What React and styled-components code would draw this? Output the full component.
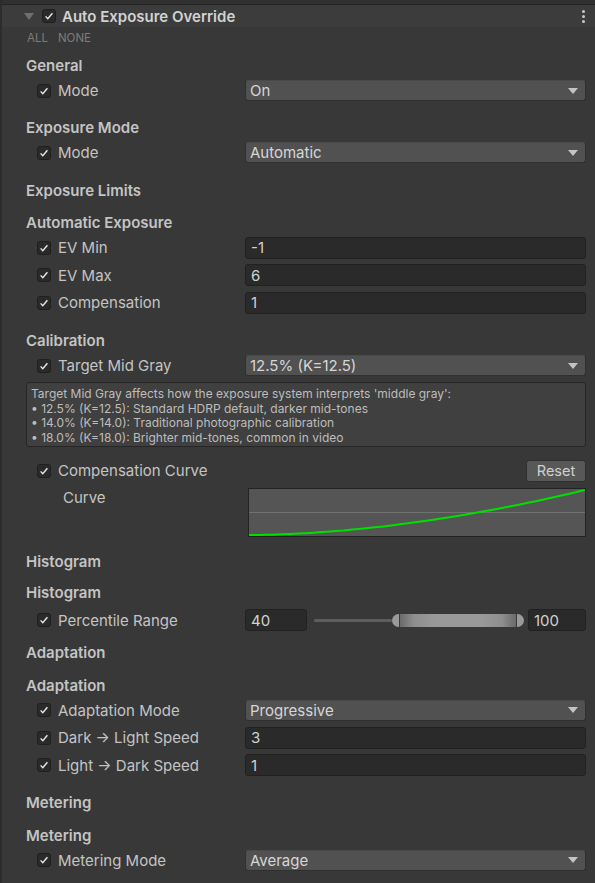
import React from 'react';
import styled, { createGlobalStyle } from 'styled-components';

const GlobalStyle = createGlobalStyle`
  html, body {
    margin: 0;
    padding: 0;
    background: #383838;
  }
  body {
    font-family: Inter, "Noto Sans", "DejaVu Sans", sans-serif;
    color: #c4c4c4;
  }
`;

const Panel = styled.div`
  width: 595px;
  height: 883px;
  box-sizing: border-box;
  background: #383838;
  border-left: 2px solid #2c2c2c;
  overflow: hidden;
`;

const TopStrip = styled.div`
  height: 4px;
  background: #303030;
  border-bottom: 1px solid #232323;
`;

const Header = styled.div`
  height: 22px;
  display: flex;
  align-items: center;
  background: #3c3c3c;
  padding-left: 22px;
  padding-right: 10px;
`;

const Foldout = styled.span`
  width: 0;
  height: 0;
  border-left: 5px solid transparent;
  border-right: 5px solid transparent;
  border-top: 7px solid #6f6f6f;
  margin-right: 8px;
`;

const Title = styled.span`
  font-size: 15px;
  font-weight: 600;
  color: #d2d2d2;
  margin-left: 6px;
  flex: 1;
`;

const Kebab = styled.span`
  display: flex;
  flex-direction: column;
  gap: 2px;
  span {
    width: 3px;
    height: 3px;
    border-radius: 50%;
    background: #c8c8c8;
  }
`;

const AllNone = styled.div`
  height: 18px;
  padding-top: 2px;
  display: flex;
  align-items: center;
  gap: 10px;
  padding-left: 25px;
  font-size: 11.5px;
  color: #7c7c7c;
`;

const Heading = styled.div`
  height: 22px;
  line-height: 22px;
  margin-top: ${p => p.$mt || 0}px;
  padding-left: 24px;
  font-size: 15px;
  font-weight: 600;
  color: #c4c4c4;
`;

const Row = styled.div`
  height: 27.5px;
  margin-top: ${p => p.$mt || 0}px;
  display: flex;
  align-items: center;
  padding: 0 9px 0 35px;
`;

const LabelCell = styled.div`
  width: 208px;
  flex: none;
  display: flex;
  align-items: center;
  gap: 7px;
  font-size: 15px;
  color: #c4c4c4;
  white-space: nowrap;
`;

const Box = styled.span`
  width: 14px;
  height: 14px;
  box-sizing: border-box;
  flex: none;
  border-radius: 3px;
  background: #2a2a2a;
  border: 1px solid #1f1f1f;
  display: flex;
  align-items: center;
  justify-content: center;
`;

const Dropdown = styled.div`
  flex: 1;
  height: 21px;
  box-sizing: border-box;
  border-radius: 3px;
  background: #515151;
  border: 1px solid #303030;
  border-top-color: #4a4a4a;
  display: flex;
  align-items: center;
  padding: 0 7px 0 4px;
  font-size: 15px;
  color: #d6d6d6;
  span:first-child { flex: 1; }
`;

const Arrow = styled.span`
  width: 0;
  height: 0;
  border-left: 5px solid transparent;
  border-right: 5px solid transparent;
  border-top: 6px solid #c4c4c4;
`;

const Field = styled.div`
  flex: ${p => (p.$w ? 'none' : 1)};
  width: ${p => (p.$w ? `${p.$w}px` : 'auto')};
  height: 22px;
  box-sizing: border-box;
  border-radius: 3px;
  background: #2a2a2a;
  border: 1px solid #212121;
  display: flex;
  align-items: center;
  padding-left: 5px;
  font-size: 15px;
  color: #d2d2d2;
`;

const HelpBox = styled.div`
  margin: 2.5px 9px 0 24px;
  height: 65px;
  box-sizing: border-box;
  border: 1px solid #262626;
  border-radius: 3px;
  background: #404040;
  padding: 4px 4px 0;
  font-size: 12px;
  line-height: 14.5px;
  color: #bdbdbd;
`;

const ResetButton = styled.div`
  margin-left: auto;
  width: 60px;
  height: 22px;
  box-sizing: border-box;
  border-radius: 3px;
  background: #585858;
  border: 1px solid #303030;
  display: flex;
  align-items: center;
  justify-content: center;
  font-size: 14.5px;
  color: #d0d0d0;
`;

const CurveRow = styled.div`
  display: flex;
  margin-top: 3px;
  padding: 0 9px 0 61px;
`;

const CurveLabel = styled.div`
  width: 185px;
  flex: none;
  font-size: 15px;
  line-height: 20px;
  color: #c4c4c4;
`;

const CurveBox = styled.div`
  flex: 1;
  height: 49px;
  box-sizing: border-box;
  border: 1px solid #232323;
  background: #555555;
  svg { display: block; }
`;

const Slider = styled.div`
  flex: 1;
  height: 22px;
  margin: 0 4px 0 7px;
  display: flex;
  align-items: center;
`;

const Track = styled.div`
  width: 78px;
  height: 3px;
  background: #5e5e5e;
  border-radius: 2px;
  flex: none;
`;

const Range = styled.div`
  flex: 1;
  height: 13px;
  display: flex;
  align-items: stretch;
`;

const Cap = styled.span`
  width: 7px;
  background: #9a9a9a;
  border-radius: ${p => (p.$right ? '0 7px 7px 0' : '7px 0 0 7px')};
  border-${p => (p.$right ? 'left' : 'right')}: 1.5px solid #3a3a3a;
`;

const RangeBody = styled.span`
  flex: 1;
  background: linear-gradient(90deg, #6a6a6a 0%, #8e8e8e 12%, #999 30%, #999 70%, #8e8e8e 88%, #6a6a6a 100%);
`;

const Check = () => (
  <Box>
    <svg width="10" height="10" viewBox="0 0 10 10">
      <polyline points="1.6,5.4 3.8,7.8 8.4,2.2" fill="none" stroke="#e8e8e8" strokeWidth="1.4" />
    </svg>
  </Box>
);

const curvePath = (() => {
  const w = 336;
  const h = 47;
  const pts = [];
  for (let i = 0; i <= 60; i++) {
    const t = i / 60;
    const y = h - 1 - Math.pow(t, 1.8) * (h - 2);
    pts.push(`${(t * w).toFixed(1)},${y.toFixed(1)}`);
  }
  return 'M' + pts.join(' L');
})();

const PropRow = ({ label, mt, children }) => (
  <Row $mt={mt}>
    <LabelCell>
      <Check />
      {label}
    </LabelCell>
    {children}
  </Row>
);

const Select = ({ value }) => (
  <Dropdown>
    <span>{value}</span>
    <Arrow />
  </Dropdown>
);

export default function App() {
  return (
    <>
      <GlobalStyle />
      <Panel>
        <TopStrip />
        <Header>
          <Foldout />
          <Check />
          <Title>Auto Exposure Override</Title>
          <Kebab><span /><span /><span /></Kebab>
        </Header>
        <AllNone><span>ALL</span><span>NONE</span></AllNone>

        <Heading $mt={8}>General</Heading>
        <PropRow label="Mode"><Select value="On" /></PropRow>

        <Heading $mt={12.5}>Exposure Mode</Heading>
        <PropRow label="Mode"><Select value="Automatic" /></PropRow>

        <Heading $mt={13.5}>Exposure Limits</Heading>
        <Heading $mt={10}>Automatic Exposure</Heading>
        <PropRow label="EV Min"><Field>-1</Field></PropRow>
        <PropRow label="EV Max"><Field>6</Field></PropRow>
        <PropRow label="Compensation"><Field>1</Field></PropRow>

        <Heading $mt={13.5}>Calibration</Heading>
        <PropRow label="Target Mid Gray"><Select value="12.5% (K=12.5)" /></PropRow>
        <HelpBox>
          Target Mid Gray affects how the exposure system interprets 'middle gray':<br />
          • 12.5% (K=12.5): Standard HDRP default, darker mid-tones<br />
          • 14.0% (K=14.0): Traditional photographic calibration<br />
          • 18.0% (K=18.0): Brighter mid-tones, common in video
        </HelpBox>
        <PropRow label="Compensation Curve" mt={10}>
          <ResetButton>Reset</ResetButton>
        </PropRow>
        <CurveRow>
          <CurveLabel>Curve</CurveLabel>
          <CurveBox>
            <svg width="336" height="47" viewBox="0 0 336 47" preserveAspectRatio="none">
              <line x1="0" y1="23.5" x2="336" y2="23.5" stroke="#717171" strokeWidth="1" />
              <path d={curvePath} fill="none" stroke="#00e000" strokeWidth="2" />
            </svg>
          </CurveBox>
        </CurveRow>

        <Heading $mt={14}>Histogram</Heading>
        <Heading $mt={9}>Histogram</Heading>
        <PropRow label="Percentile Range" mt={3}>
          <Field $w={62}>40</Field>
          <Slider>
            <Track />
            <Range>
              <Cap />
              <RangeBody />
              <Cap $right />
            </Range>
          </Slider>
          <Field $w={58}>100</Field>
        </PropRow>

        <Heading $mt={7.5}>Adaptation</Heading>
        <Heading $mt={11}>Adaptation</Heading>
        <PropRow label="Adaptation Mode"><Select value="Progressive" /></PropRow>
        <PropRow label="Dark → Light Speed"><Field>3</Field></PropRow>
        <PropRow label="Light → Dark Speed"><Field>1</Field></PropRow>

        <Heading $mt={12.5}>Metering</Heading>
        <Heading $mt={11}>Metering</Heading>
        <PropRow label="Metering Mode"><Select value="Average" /></PropRow>
      </Panel>
    </>
  );
}
